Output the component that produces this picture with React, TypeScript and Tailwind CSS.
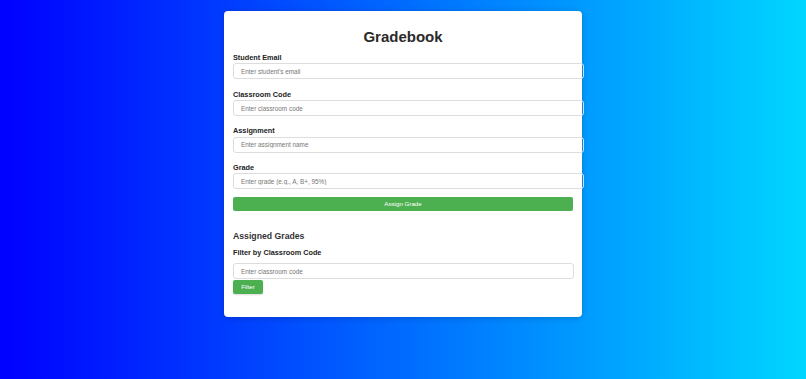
export default function App() {
  const fields = [
    { label: "Student Email", placeholder: "Enter student's email" },
    { label: "Classroom Code", placeholder: "Enter classroom code" },
    { label: "Assignment", placeholder: "Enter assignment name" },
    { label: "Grade", placeholder: "Enter grade (e.g., A, B+, 95%)" },
  ];

  return (
    <div
      className="min-h-[379px] w-full bg-linear-to-r/srgb from-[#0000ff] to-[#00d6ff] pt-[11px]"
      style={{ fontFamily: '"Liberation Sans", Arial, sans-serif' }}
    >
      <div className="mx-auto w-[358px] rounded-[4px] bg-white px-[9px] pt-[17px] pb-[23px] shadow-[0_1px_6px_rgba(0,0,0,0.2)] text-[#333]">
        <h1 className="text-center text-[15px] font-bold leading-[17px] text-[#2a2a2a]">Gradebook</h1>

        <form className="mt-[8px]" onSubmit={(e) => e.preventDefault()}>
          {fields.map((f, i) => (
            <div key={f.label} className={i === fields.length - 1 ? "mb-[7.4px]" : "mb-[10.3px]"}>
              <label className="block text-[7.3px] font-bold leading-[9px] text-[#222]">{f.label}</label>
              <input
                type="text"
                placeholder={f.placeholder}
                className="mt-[1.4px] block h-[16px] w-[351px] rounded-[3px] border border-[#ddd] px-[7px] text-[6.4px] outline-none placeholder:text-[#777]"
              />
            </div>
          ))}
          <button
            type="submit"
            className="block h-[14.5px] w-full rounded-[2px] bg-[#4caf50] text-[6.2px] text-white"
          >
            Assign Grade
          </button>
        </form>

        <h2 className="mt-[19.6px] text-[8.7px] font-bold leading-[10px] text-[#333]">Assigned Grades</h2>
        <div className="mt-[6.7px] text-[7.3px] font-bold leading-[9px] text-[#222]">Filter by Classroom Code</div>
        <input
          type="text"
          placeholder="Enter classroom code"
          className="mt-[6.4px] block h-[16px] w-[341px] rounded-[3px] border border-[#ddd] px-[7px] text-[6.4px] outline-none placeholder:text-[#777]"
        />
        <button className="mt-[0.6px] block h-[14.7px] w-[30px] rounded-[2px] bg-[#4caf50] text-[6.2px] text-white shadow-[0_1px_2px_rgba(0,0,0,0.15)]">
          Filter
        </button>
      </div>
    </div>
  );
}
